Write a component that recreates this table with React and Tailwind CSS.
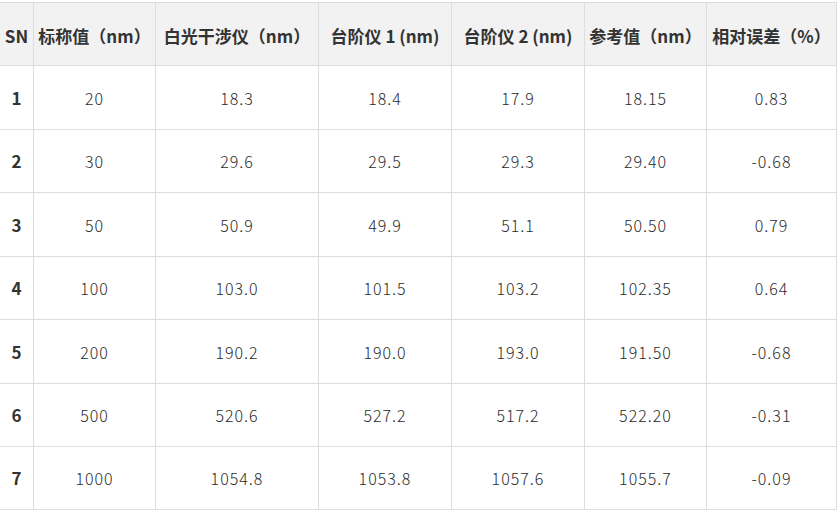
import React from "react";

const headers = [
  "SN",
  "标称值（nm）",
  "白光干涉仪（nm）",
  "台阶仪 1 (nm)",
  "台阶仪 2 (nm)",
  "参考值（nm）",
  "相对误差（%）",
];

const rows = [
  ["1", "20", "18.3", "18.4", "17.9", "18.15", "0.83"],
  ["2", "30", "29.6", "29.5", "29.3", "29.40", "-0.68"],
  ["3", "50", "50.9", "49.9", "51.1", "50.50", "0.79"],
  ["4", "100", "103.0", "101.5", "103.2", "102.35", "0.64"],
  ["5", "200", "190.2", "190.0", "193.0", "191.50", "-0.68"],
  ["6", "500", "520.6", "527.2", "517.2", "522.20", "-0.31"],
  ["7", "1000", "1054.8", "1053.8", "1057.6", "1055.7", "-0.09"],
];

// alternating row heights so the grid lines land where the screenshot has them
const rowHeights = ["h-[64px]", "h-[63px]", "h-[64px]", "h-[63px]", "h-[64px]", "h-[63px]", "h-[63px]"];

function App() {
  return (
    <div
      className="w-[839px] h-[512px] bg-white pt-[2px] text-[#333333]"
      style={{ fontFamily: '"Noto Sans CJK SC", "Noto Sans", sans-serif' }}
    >
      <div className="grid grid-cols-[34px_122px_163px_133px_133px_122px_130px] w-[837px] border-t border-[#dddddd]">
        {headers.map((h) => (
          <div
            key={h}
            className="h-[63px] flex items-center justify-center pt-[3px] bg-[#f2f2f2] border-r border-b border-[#dddddd] text-[17px] font-semibold whitespace-nowrap"
          >
            {h}
          </div>
        ))}
        {rows.map((row, i) =>
          row.map((cell, j) => (
            <div
              key={i + "-" + j}
              className={
                rowHeights[i] +
                " flex items-center justify-center bg-white border-r border-b border-[#dddddd] text-[16px] " +
                (j === 0 ? "font-semibold text-[17px]" : "font-light tracking-[1px] text-[#2b2b2b]")
              }
            >
              {cell}
            </div>
          ))
        )}
      </div>
    </div>
  );
}

export default App;
